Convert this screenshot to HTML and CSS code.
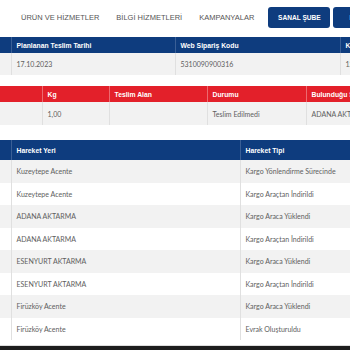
FILE: index.html
```html
<!DOCTYPE html>
<html lang="tr">
<head>
    <meta charset="UTF-8">
    <meta name="viewport" content="width=device-width, initial-scale=1.0">
    <title>Kargo Takip</title>
    <link rel="stylesheet" href="styles.css">
</head>
<body>
    <div class="page">
        <!-- Top menu -->
        <nav class="topnav">
            <a href="#" class="nav-link">ÜRÜN VE HİZMETLER</a>
            <a href="#" class="nav-link">BİLGİ HİZMETLERİ</a>
            <a href="#" class="nav-link">KAMPANYALAR</a>
            <a href="#" class="nav-btn">SANAL ŞUBE</a>
            <a href="#" class="nav-btn nav-btn-wide">KURUMSAL</a>
        </nav>

        <!-- Gönderi bilgileri -->
        <table class="grid grid-blue info-table">
            <colgroup>
                <col style="width: 11px">
                <col style="width: 164px">
                <col style="width: 165px">
                <col style="width: 90px">
            </colgroup>
            <thead>
                <tr>
                    <th></th>
                    <th>Planlanan Teslim Tarihi</th>
                    <th>Web Sipariş Kodu</th>
                    <th>Kargo Takip No</th>
                </tr>
            </thead>
            <tbody>
                <tr>
                    <td></td>
                    <td>17.10.2023</td>
                    <td>5310090900316</td>
                    <td>1234567890</td>
                </tr>
            </tbody>
        </table>

        <!-- Durum -->
        <table class="grid grid-red status-table">
            <colgroup>
                <col style="width: 42px">
                <col style="width: 67px">
                <col style="width: 98px">
                <col style="width: 99px">
                <col style="width: 124px">
            </colgroup>
            <thead>
                <tr>
                    <th></th>
                    <th>Kg</th>
                    <th>Teslim Alan</th>
                    <th>Durumu</th>
                    <th>Bulunduğu Şube</th>
                </tr>
            </thead>
            <tbody>
                <tr>
                    <td></td>
                    <td>1,00</td>
                    <td></td>
                    <td>Teslim Edilmedi</td>
                    <td>ADANA AKTARMA</td>
                </tr>
            </tbody>
        </table>

        <!-- Hareketler -->
        <table class="grid grid-blue moves-table">
            <colgroup>
                <col style="width: 11px">
                <col style="width: 229px">
                <col style="width: 190px">
            </colgroup>
            <thead>
                <tr>
                    <th></th>
                    <th>Hareket Yeri</th>
                    <th>Hareket Tipi</th>
                </tr>
            </thead>
            <tbody>
                <tr><td></td><td>Kuzeytepe Acente</td><td>Kargo Yönlendirme Sürecinde</td></tr>
                <tr><td></td><td>Kuzeytepe Acente</td><td>Kargo Araçtan İndirildi</td></tr>
                <tr><td></td><td>ADANA AKTARMA</td><td>Kargo Araca Yüklendi</td></tr>
                <tr><td></td><td>ADANA AKTARMA</td><td>Kargo Araçtan İndirildi</td></tr>
                <tr><td></td><td>ESENYURT AKTARMA</td><td>Kargo Araca Yüklendi</td></tr>
                <tr><td></td><td>ESENYURT AKTARMA</td><td>Kargo Araçtan İndirildi</td></tr>
                <tr><td></td><td>Firüzköy Acente</td><td>Kargo Araca Yüklendi</td></tr>
                <tr><td></td><td>Firüzköy Acente</td><td>Evrak Oluşturuldu</td></tr>
            </tbody>
        </table>

        <footer class="footer"></footer>
    </div>
</body>
</html>
```

FILE: styles.css
```css
:root {
    --blue: #0e3c7e;
    --red: #e3202a;
    --row-alt: #f2f2f2;
    --line: #e0e0e0;
    --text: #606060;
    --nav-text: #555555;
}

* {
    margin: 0;
    padding: 0;
    box-sizing: border-box;
}

body {
    background: #ffffff;
    font-family: 'Lato', 'Open Sans', sans-serif;
    color: var(--text);
}

.page {
    width: 350px;
    height: 350px;
    overflow: hidden;
}

/* Top menu */
.topnav {
    display: flex;
    align-items: center;
    height: 37px;
    padding-left: 21px;
    padding-bottom: 3px;
    white-space: nowrap;
}

.nav-link {
    font-family: 'Liberation Sans', Arial, sans-serif;
    font-size: 7.5px;
    color: var(--nav-text);
    text-decoration: none;
    margin-right: 17px;
}

.nav-link:nth-child(3) {
    margin-right: 14px;
}

.nav-btn {
    flex-shrink: 0;
    display: flex;
    align-items: center;
    justify-content: center;
    width: 62px;
    height: 21px;
    margin-right: 3px;
    background: var(--blue);
    border-radius: 3px;
    color: #ffffff;
    font-family: 'Liberation Sans', Arial, sans-serif;
    font-size: 6.6px;
    font-weight: 700;
    text-decoration: none;
}

.nav-btn-wide {
    width: 70px;
}

/* Tables */
.grid {
    border-collapse: collapse;
    table-layout: fixed;
    width: 430px;
}

.grid th {
    height: 16px;
    padding: 0 5px;
    text-align: left;
    color: #ffffff;
    font-family: 'Liberation Sans', Arial, sans-serif;
    font-size: 6.8px;
    font-weight: 700;
    white-space: nowrap;
    overflow: hidden;
}

.grid-blue th {
    background: var(--blue);
    border-left: 1px solid #3a5f96;
}

.grid-red th {
    background: var(--red);
    border-left: 1px solid #ec6a70;
}

.grid th:first-child,
.grid td:first-child {
    border-left: none;
}

.grid td {
    height: 22px;
    padding: 0 5px;
    font-size: 7px;
    color: var(--text);
    white-space: nowrap;
    overflow: hidden;
    border-left: 1px solid var(--line);
}

.grid tbody tr:nth-child(odd) td {
    background: var(--row-alt);
}

.info-table {
    margin-bottom: 11px;
}

.status-table {
    margin-bottom: 15px;
}

.status-table td {
    height: 23px;
}

.moves-table th {
    height: 20px;
}

.moves-table td {
    height: 22.5px;
}

.footer {
    height: 10px;
    margin-top: 5px;
    border-top: 1px solid #dddddd;
    background: #1d1d1d;
}
```
